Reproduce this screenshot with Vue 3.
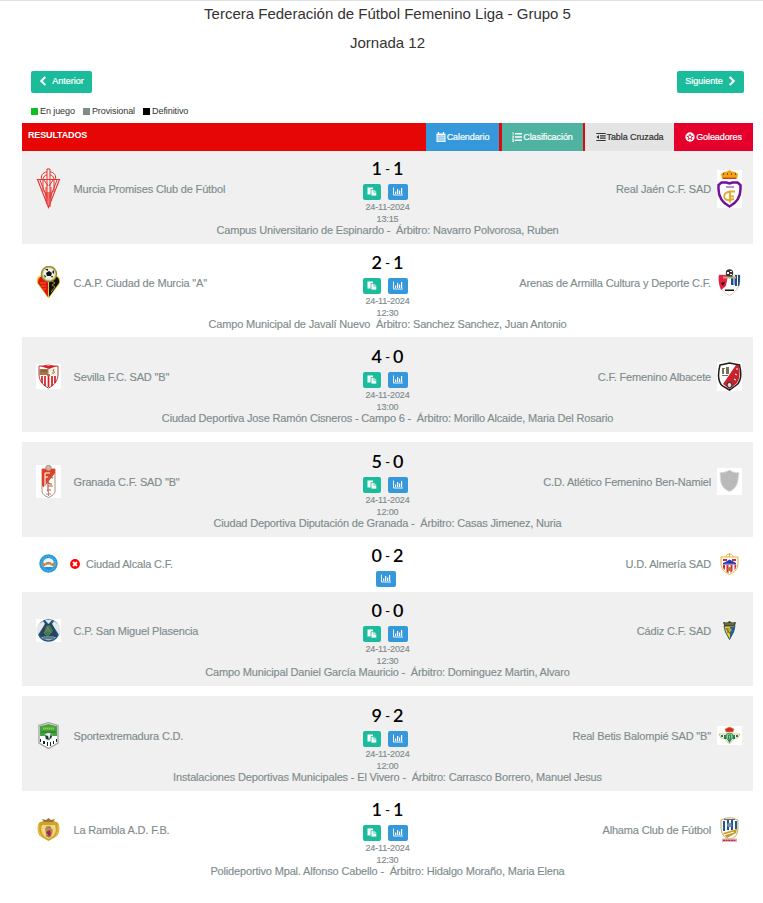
<template>
  <div class="page">
    <header class="heading">
      <h4>Tercera Federación de Fútbol Femenino Liga - Grupo 5</h4>
      <h4>Jornada 12</h4>
    </header>

    <nav class="pager">
      <button type="button" class="btn-page">
        <svg width="8" height="10" viewBox="0 0 8 10"><path d="M6.3 1 2.3 5l4 4" fill="none" stroke="#fff" stroke-width="2.1" /></svg>
        <span>Anterior</span>
      </button>
      <button type="button" class="btn-page">
        <span>Siguiente</span>
        <svg width="8" height="10" viewBox="0 0 8 10"><path d="M1.7 1l4 4-4 4" fill="none" stroke="#fff" stroke-width="2.1" /></svg>
      </button>
    </nav>

    <div class="legend">
      <span class="legend-item live">En juego</span>
      <span class="legend-item provisional">Provisional</span>
      <span class="legend-item final">Definitivo</span>
    </div>

    <div class="bar">
      <strong>RESULTADOS</strong>
      <div class="tabs">
        <a class="tab calendar">
          <svg width="10" height="10" viewBox="0 0 10 10"><path fill="#fff" d="M.5 1.5h1.3V0h1.4v1.5h3.6V0h1.4v1.5h1.3V10h-9z" /><path d="M1 3.8h8M1 5.9h8M1 8h8M3 3.5v6M5 3.5v6M7 3.5v6" stroke="#3498db" stroke-width=".5" /></svg>
          <span>Calendario</span>
        </a>
        <a class="tab ranking">
          <svg width="10" height="10" viewBox="0 0 10 10"><path d="M3 1.7h7M3 5h7M3 8.3h7" stroke="#fff" stroke-width="1.6" /><path d="M.3.7h.9v2.500M.2 4.2h1.5v.9L.3 6H2M.2 7.5h1.5v2H.2M.6 8.5h1" fill="none" stroke="#fff" stroke-width=".8" /></svg>
          <span>Clasificación</span>
        </a>
        <a class="tab cross">
          <svg width="10" height="10" viewBox="0 0 10 10"><path d="M.3 1.5h9.4M4 3.9h5.7M4 6.1h5.7M.3 8.5h9.4" stroke="#333" stroke-width="1.1" /><path fill="#333" d="M3 3v4L.3 5z" /></svg>
          <span>Tabla Cruzada</span>
        </a>
        <a class="tab scorers">
          <svg width="10" height="10" viewBox="0 0 10 10"><circle cx="5" cy="5" r="4.7" fill="#fff" /><path fill="none" stroke="#e4002b" stroke-width=".9" d="M5 3 7 4.500 6.200 6.800H3.800L3 4.500zM5 3V1.800M7 4.500l1.400-.4M6.200 6.800l.9 1.200M3.800 6.800 2.900 8M3 4.500l-1.400-.4" /></svg>
          <span>Goleadores</span>
        </a>
      </div>
    </div>

    <main class="matches">
      <section
        v-for="match in matches"
        :key="match.home"
        class="match"
        :class="{ shaded: match.shaded, spaced: match.spaced, short: !match.date, lifted: match.lifted }"
      >
        <div class="match-main">
          <div class="crest" v-html="crests[match.homeCrest]"></div>
          <div class="team home" :class="{ withdrawn: match.withdrawn }">
            <svg v-if="match.withdrawn" width="10" height="10" viewBox="0 0 10 10"><circle cx="5" cy="5" r="4.9" fill="#f00" /><path d="m3 3 4 4M7 3 3 7" stroke="#fff" stroke-width="1.8" /></svg>
            <span>{{ match.home }}</span>
          </div>
          <div class="result">
            <div class="score"><b>{{ match.score[0] }}</b><i>-</i><b>{{ match.score[1] }}</b></div>
            <div class="actions">
              <a v-if="match.date" class="action report">
                <svg width="10" height="9" viewBox="0 0 10 9"><path fill="#fff" d="M.5.500h5.500v7H.5z" /><path fill="#fff" stroke="#1abc9c" stroke-width=".8" d="M4 2.600h3l2.700 2.500V9H4z" /><path d="M6.800 2.800v2.500h2.700" fill="none" stroke="#1abc9c" stroke-width=".6" /></svg>
              </a>
              <a class="action stats">
                <svg width="10" height="9" viewBox="0 0 10 9"><path fill="none" stroke="#fff" stroke-width=".9" d="M.5.5v7.500H10" /><path fill="#fff" d="M2 4.5h1.2V7H2zM4 2h1.2v5H4zM6 3.5h1.2V7H6zM8 1h1.2v6H8z" /></svg>
              </a>
            </div>
            <template v-if="match.date">
              <div class="when">{{ match.date }}</div>
              <div class="when">{{ match.time }}</div>
            </template>
          </div>
          <div class="team away">{{ match.away }}</div>
          <div class="crest" v-html="crests[match.awayCrest]"></div>
        </div>
        <div v-if="match.venue" class="venue">{{ match.venue }}</div>
      </section>
    </main>
  </div>
</template>

<script setup>
const date = '24-11-2024'

const matches = [
  { home: 'Murcia Promises Club de Fútbol', homeCrest: 'murcia', away: 'Real Jaén C.F. SAD', awayCrest: 'jaen', score: [1, 1], date, time: '13:15', venue: 'Campus Universitario de Espinardo -\u00a0 Árbitro: Navarro Polvorosa, Ruben', shaded: true },
  { home: 'C.A.P. Ciudad de Murcia "A"', homeCrest: 'cap', away: 'Arenas de Armilla Cultura y Deporte C.F.', awayCrest: 'armilla', score: [2, 1], date, time: '12:30', venue: 'Campo Municipal de Javalí Nuevo\u00a0 Árbitro: Sanchez Sanchez, Juan Antonio' },
  { home: 'Sevilla F.C. SAD "B"', homeCrest: 'sevilla', away: 'C.F. Femenino Albacete', awayCrest: 'albacete', score: [4, 0], date, time: '13:00', venue: 'Ciudad Deportiva Jose Ramón Cisneros - Campo 6 -\u00a0 Árbitro: Morillo Alcaide, Maria Del Rosario', shaded: true, lifted: true },
  { home: 'Granada C.F. SAD "B"', homeCrest: 'granada', away: 'C.D. Atlético Femenino Ben-Namiel', awayCrest: 'blank', score: [5, 0], date, time: '12:00', venue: 'Ciudad Deportiva Diputación de Granada -\u00a0 Árbitro: Casas Jimenez, Nuria', shaded: true, spaced: true, lifted: true },
  { home: 'Ciudad Alcala C.F.', homeCrest: 'alcala', away: 'U.D. Almería SAD', awayCrest: 'almeria', score: [0, 2], withdrawn: true },
  { home: 'C.P. San Miguel Plasencia', homeCrest: 'plasencia', away: 'Cádiz C.F. SAD', awayCrest: 'cadiz', score: [0, 0], date, time: '12:30', venue: 'Campo Municipal Daniel García Mauricio -\u00a0 Árbitro: Dominguez Martin, Alvaro', shaded: true },
  { home: 'Sportextremadura C.D.', homeCrest: 'sport', away: 'Real Betis Balompié SAD "B"', awayCrest: 'betis', score: [9, 2], date, time: '12:00', venue: 'Instalaciones Deportivas Municipales - El Vivero -\u00a0 Árbitro: Carrasco Borrero, Manuel Jesus', shaded: true, spaced: true, lifted: true },
  { home: 'La Rambla A.D. F.B.', homeCrest: 'rambla', away: 'Alhama Club de Fútbol', awayCrest: 'alhama', score: [1, 1], date, time: '12:30', venue: 'Polideportivo Mpal. Alfonso Cabello -\u00a0 Árbitro: Hidalgo Moraño, Maria Elena' }
]

const svg = (height, body) => `<svg width="25" height="${height}" viewBox="0 0 25 ${height}" style="display:block">${body}</svg>`
const white = (height) => `<rect width="25" height="${height}" fill="#fff"/>`

const crests = {
  murcia: svg(41, '<g fill="none" stroke="#e5322d"><path d="M1.500 11.500h22L12.500 39.500z" stroke-width="1.100"/><path d="M11 1h3v38M11 1v35M6 12C4 8 7 4 11 4M19 12c2-4-1-8-5-8M7 11c1-3 2-4 4-4M18 11c-1-3-2-4-4-4M4 12l7 18M21 12l-7 18M7 12v12M18 12v12M8 12l4 6M17 12l-4 6M10 19v14M15 19v14"/></g><path fill="#e5322d" opacity=".6" d="M9 24h7l-3.500 15z"/>'),
  jaen: svg(38, white(38) + '<path d="M12.500 36.500C6 33 1.500 27 1.500 19v-4l3-2.500h5l3 1 3-1h5l3 2.500v4c0 8-4.500 14-11 17.500z" fill="#fff" stroke="#71139a" stroke-width="2.500"/><path fill="#f2a20d" d="M5 9 4 4l3-2 3-.500L12.500 0l2.500 1.500 3 .500 3 2-1 5z"/><path d="M6 8.300h13" stroke="#c9362b" stroke-width="1.300"/><path d="M6 4h1m3 0h1m3 0h1m3 0h1" stroke="#a44317" stroke-width="2"/><path d="M9 17h8" stroke="#a96bc0" stroke-width="1.500"/><g fill="none" stroke="#e0ac30" stroke-width="1.900"><path d="M18 21.500h-5v11M13 26.500h4M13 22c-7-1-8 9-1 8l5-1"/></g>'),
  cap: svg(33, '<path fill="#e9c62f" d="M12.500 32.500 1 17c-1-5 2-8 5-8h13c4 1 6 4 4.500 9z"/><path fill="#df1410" d="M12 31 2 17c0-5 3-7 5-7l5 4z"/><path fill="#111" d="M13 31V14l5-4c4 0 6 4 5 7z"/><circle cx="13" cy="8" r="7.500" fill="#ded9a8" stroke="#998d28" stroke-width="1.500"/><circle cx="13" cy="8" r="5.500" fill="#eee"/><path fill="#111" d="m13 5 3 2-1 3h-4l-1-3zM9 3h3v2zM18 4v4l-2-2zM8 9l2 1-1 2zM17 10h-2l1 2z"/><path d="M4 17h6M5 20h5M7 23h3" stroke="#e36e22"/><path d="m16 15 3 2-3 2 3 2-4 5" fill="none" stroke="#a58c22"/>'),
  armilla: svg(27, '<path fill="#fff" stroke="#c8bb91" stroke-width=".700" d="M2 6h21c0 10-1 15-10.500 20.500C3 22 2 15 2 6z"/><path fill="#e72043" d="M2 6h9l-2 11-5 4C2 16 1 11 2 6z"/><path fill="#204d86" d="M14 7h2v9h-2zM18 6h2v11h-2zM21 6h2c0 5 0 9-1 11h-1z"/><path fill="#8fa7c4" d="M16 8h2v8h-2z"/><path d="M6 8.500h13" stroke="#c3a67b" stroke-width="2"/><circle cx="12.500" cy="4" r="3.700" fill="#333"/><path fill="#fff" d="M10 3h2v2h-2zM13 2h2v1h-2zM13 5h2v1h-2z"/><path fill="#111" d="m4 14 4-1-2 4zM8 20.500h9V22H8z"/><path fill="#fff" d="m11 11 5 8H8z"/>'),
  sevilla: svg(25, white(25) + '<path fill="#fff" stroke="#b43d35" stroke-width="1" d="M3 2h4l5.500-1L18 2h4v8c0 6-3 11-9.500 14C6 21 3 16 3 10z"/><path d="M6 12v7M9 12v10M12.500 12v11M16 12v10M19 12v7" stroke="#d41f28" stroke-width="1.700"/><path fill="#d42028" d="M4 2h17L13 5z"/><path fill="#ab7343" d="M3.500 5h9v6h-9zM11 10h3v2h-3z"/><circle cx="17" cy="7.500" r="3.600" fill="#f6f0dc"/><path d="M16 9c3 1 3-2 1-2l1-2M5 7h6" fill="none" stroke="#655040" stroke-width=".8"/>'),
  albacete: svg(29, white(29) + '<path fill="#fff" stroke="#1d1a1a" stroke-width="1.500" d="m3 3 5-1 4.500-1 5 1 5 1c2 8 2 16-3 20l-7 5-7-4C1 20 1 11 3 3z"/><path fill="#c8222c" d="M19 3h3c1 8 1 15-3 19l-6.500 5L6 22z"/><path fill="#777052" d="M5 6h3v1H7v5H5zM9 5h3v7H9zM5 13h6v1H5z"/><path d="M20 6v2M18 12l2 1M17 17l2 1" stroke="#fff"/><circle cx="12.500" cy="23" r="2.500" fill="#ddd" stroke="#222"/>'),
  granada: svg(33, white(33) + '<path fill="#fff" stroke="#b98b76" stroke-width="1" d="M6 4h13v22c0 3-3 5-6.500 6.500C9 31 6 29 6 26z"/><path fill="#e83a20" d="M6 4h13v4L9 21H6z"/><path d="M9 21V8h7M9 12h5M19 7 7 22M17 13c-6-3-7 7-1 6M12 14v13M12 21h5M11 25h4" fill="none" stroke="#bf5b47" stroke-width="1.200"/><path d="M9 21V8h5M9 12h3" fill="none" stroke="#fff"/><circle cx="12.500" cy="3" r="2.800" fill="#cbb6a2" stroke="#a17966" stroke-width=".7"/><path d="M12.500 27v4M10 29h5" stroke="#b68777"/>'),
  blank: svg(27, white(27) + '<path fill="#bababa" stroke="#ddd" stroke-width=".700" d="M3 4.500c3 .500 7-1 9.500-2.500C15 4 19 5 22 4.500l-1 8c-1 6-4 9-8.500 11-5-2-8-5-9-11z"/>'),
  alcala: svg(19, '<circle cx="12.500" cy="9.500" r="9.200" fill="#269bdc"/><circle cx="12.500" cy="9.500" r="7" fill="none" stroke="#82c7ea" stroke-dasharray="1 1.300"/><circle cx="12.500" cy="9.500" r="5.500" fill="#e9f5fb"/><path fill="#bd8a4e" d="M6 10c0-2 2-2 3 0 1-3 6-3 7 0 1-2 3-2 3 0v2h-3c-1-2-6-2-7 0H6z"/><path fill="#278bd0" d="M8 13h9l-2 2h-5z"/>'),
  almeria: svg(22, '<path fill="#fff" stroke="#e3b13e" stroke-width="1" d="M4 4h17v6c0 6-3 9-8.500 11.500C7 19 4 16 4 10z"/><path fill="none" stroke="#e4b440" d="M9 4c0-4 7-4 7 0M12.500 0v4"/><path fill="#e6252c" d="M6 6h4v2H6zM15 6h4v2h-4zM6 12h2v5l-2-2zM9.500 12h2v8l-2-1zM13.500 12h2v6l-2 2zM17.500 12h2l-1 4-1 1z"/><path fill="#2037b8" d="M6 10q3-1 6.500-3.500L19 10v1.500H6z"/><path d="M8 11h9" stroke="#87a2d6" stroke-width=".7"/><circle cx="12.500" cy="16" r="2" fill="#b57b22"/>'),
  plasencia: svg(23, white(23) + '<circle cx="12.500" cy="11.500" r="11.200" fill="#24527e"/><path fill="#e2e9eb" d="m2 6 5-4 2 3-7 11C0 12 0 9 2 6zM23 6l-5-4-2 3 7 11c2-4 2-7 0-10zM9 1h7l-3.500 4z"/><path fill="#27445b" d="m9 5 7 0 5 11-8 5-9-5z"/><path fill="#2f815c" d="m10 7 4-1 3 6-5 6-4-3z"/><path d="m8 14 4-5 3 5M12 7v6" stroke="#b06f56" fill="none"/><path fill="#9eb5bc" d="m5 18.500 3-1h9l3 1-2 1.500-5.500 1.500L7 20z"/><path d="M7 19h11" stroke="#23415f"/>'),
  cadiz: svg(19, '<path fill="#edce26" stroke="#28557c" stroke-width="1" d="M7 5h11l-1.500 6-4 7.500-4-7.500z"/><path fill="#205c9b" d="M13 6h5l-1 4-4 8z"/><path fill="#41452f" d="M7 4 6 1l4 .500L12.500 0 15 1.500 19 1l-1 4H7z"/><path d="M8 3h9" stroke="#9b8e3d"/><path d="m9 7 5 7M11 7v5" stroke="#665f28"/><circle cx="13" cy="9" r="1.800" fill="#bba54a"/>'),
  sport: svg(27, '<path fill="#fff" stroke="#a4a7a5" stroke-width="1.400" d="M3 3.500 12.500.700 22 3.500V21l-9.500 5.500L3 21z"/><path fill="#40a43c" d="M4 4.300 12.500 2 21 4.300V14H4z"/><path d="M7 6.500h11" stroke="#a7c64b" stroke-width="2" stroke-dasharray="1.500 .500"/><path d="M5 10h15" stroke="#21752f"/><circle cx="12.500" cy="15" r="4" fill="#e4eee4"/><path fill="#183d2a" d="m9 13 3 1 1 4-3-1zM15 11l1 4-3 3z"/><path fill="#222" d="M4 17h1v3H4zM7 19h2v3H7zM11 20h1v4h-1zM14 20h1v4h-1zM17 19h1v3h-1zM20 17h1v3h-1z"/>'),
  betis: svg(19, white(19) + '<path fill="#fff" stroke="#c9ae6a" stroke-width=".8" d="M2 8h21l-2 4h-3l-5.500 6L7 12H4z"/><path fill="#16834d" d="M4 9h2v2H4zM7 9h2v4H7zM16 9h2v4h-2zM19 9h2v2h-2zM10 13h5l-2.500 4z"/><circle cx="12.500" cy="10.500" r="3.500" fill="#98c6a2" stroke="#3e9864"/><path d="M11.500 9v4h2V9z" fill="none" stroke="#2c8952"/><path fill="#d92828" stroke="#c99f30" stroke-width=".7" d="m9 6-1-3 4.500-2L17 3l-1 3z"/>'),
  rambla: svg(25, '<path fill="#d4a127" d="M3 6c2-3 17-3 19 0 2 4 2 9-1 13l-8.500 5L4 19C1 15 1 10 3 6z"/><path fill="#f2d784" d="M6 8h13c2 6 0 11-6.500 14C6 19 4 14 6 8z"/><path fill="#b98a50" d="m9 11 5-1 3 3-1 5-3 3-3-3z"/><path fill="#9f2552" d="m10 15 4-2 1 4-2 2z"/><path d="M10 10h5M10 19h5" stroke="#614f43" stroke-width=".8"/><path fill="#95753b" d="M8 5 6 2l4 1 2.500-2L15 3l4-1-2 3z"/><path d="M3 8c-1 5 0 9 4 13M22 8c1 5 0 9-4 13" fill="none" stroke="#eec453"/>'),
  alhama: svg(26, '<path fill="#f8f7ed" stroke="#c5ad62" stroke-width="1" d="M4 3c6-3 11-3 17 0v8c0 6-3 11-8.500 11S4 16 4 10z"/><path fill="#2454a0" d="M6 4h2v10H6zM10 3h2v10h-2zM14 3h2v10h-2zM18 4h2v8h-2z"/><path d="M7 2.500h11" stroke="#606f7d"/><circle cx="12.500" cy="8" r="2.300" fill="#7b92aa"/><path fill="#c79c27" d="m6 16 14-4-1 4-9 5z"/><path d="m7 18 10-3" stroke="#fff"/><path fill="#e1b3b9" d="M5 21.500h15V25H5z"/><path d="M6 23.300h13" stroke="#b52649" stroke-width="1.300" stroke-dasharray="2 .600"/>')
}
</script>

<style>
body {
  background: #fff;
}
</style>

<style scoped>
.page {
  box-sizing: border-box;
  height: 903px;
  overflow: hidden;
  padding: 0 10px 0 22px;
  border-top: 1px solid #e0e0e0;
  font-family: 'Liberation Sans', Arial, sans-serif;
  color: #333;
}

.heading {
  height: 70px;
  text-align: center;
}

h4 {
  margin: 0;
  padding-top: 4px;
  height: 25px;
  font-size: 15px;
  line-height: 17px;
  font-weight: 400;
}

.pager {
  display: flex;
  justify-content: space-between;
  padding: 0 9px;
}

.btn-page {
  display: flex;
  align-items: center;
  justify-content: center;
  gap: 5px;
  height: 22px;
  width: 61px;
  padding: 0 0 2px;
  border: 0;
  border-radius: 2px;
  background: #1abc9c;
  color: #fff;
  font: 9px 'Liberation Sans', Arial, sans-serif;
  -webkit-text-stroke: 0.2px #fff;
}

.btn-page:last-child {
  width: 67px;
}

.legend {
  display: flex;
  gap: 8px;
  padding: 12px 0 0 9px;
  height: 18px;
  font-size: 9px;
  line-height: 12px;
  letter-spacing: -0.08px;
}

.legend-item::before {
  content: '';
  display: inline-block;
  width: 7px;
  height: 7px;
  margin-right: 2px;
  vertical-align: -1px;
  background: #10c020;
}

.legend .provisional::before {
  background: #7f8c8d;
}

.legend .final::before {
  background: #000;
}

.bar {
  position: relative;
  z-index: 1;
  display: flex;
  justify-content: space-between;
  height: 28px;
  background: #e60606;
  color: #fff;
  font-size: 9px;
}

.bar strong {
  padding-left: 6px;
  line-height: 25px;
  letter-spacing: -0.15px;
}

.tabs {
  display: flex;
}

.tab {
  display: flex;
  align-items: center;
  justify-content: center;
  gap: 1px;
  letter-spacing: -0.08px;
  -webkit-text-stroke: 0.2px currentColor;
}

.calendar {
  width: 73px;
  margin-right: 3px;
  background: #3498db;
}

.ranking {
  width: 81px;
  margin-right: 2px;
  background: #4fb3a1;
}

.cross {
  width: 89px;
  background: #e4e4e4;
  color: #333;
}

.scorers {
  width: 79px;
  background: #e4002b;
}

/* first row slides one pixel under the bar */
.matches {
  margin-top: -1px;
}

.match {
  height: 94px;
  color: #7f8c8d;
}

.shaded {
  background: #f0f0f0;
}

.lifted {
  box-shadow: 0 -1px #f0f0f0;
}

.spaced {
  margin-top: 11px;
}

.match-main {
  display: grid;
  grid-template-columns: 25px 228px 1fr 228px 25px;
  align-items: center;
  height: 77px;
  padding: 0 11px 0 14px;
}

.short {
  height: 55px;
}

.short .match-main {
  height: 53px;
}

.team {
  font-size: 11px;
  letter-spacing: -0.16px;
  -webkit-text-stroke: 0.15px currentColor;
}

.home {
  padding-left: 12.5px;
}

.withdrawn {
  display: flex;
  align-items: center;
  gap: 6px;
  padding-left: 9px;
}

.away {
  padding-right: 6px;
  text-align: right;
}

.result {
  align-self: start;
  margin-left: -3px;
  padding-top: 7px;
  text-align: center;
}

.score {
  display: flex;
  justify-content: center;
  align-items: center;
  gap: 3px;
  height: 22px;
  color: #000;
  font-family: Lato, sans-serif;
  font-size: 18px;
}

.score b {
  font-weight: 600;
}

.score i {
  font-style: normal;
  font-size: 14px;
}

.actions {
  display: flex;
  justify-content: center;
  gap: 7px;
  height: 16px;
  margin: 5px 4px 2px 0;
}

.action {
  box-sizing: border-box;
  display: flex;
  align-items: center;
  justify-content: center;
  width: 20px;
  padding-bottom: 1px;
  border-radius: 2px;
  background: #3498db;
}

.report {
  width: 18px;
  background: #1abc9c;
}

.when {
  font-size: 9px;
  line-height: 11.5px;
  letter-spacing: -0.12px;
  -webkit-text-stroke: 0.15px currentColor;
}

.venue {
  margin-top: -4px;
  font-size: 11px;
  line-height: 14px;
  letter-spacing: -0.17px;
  text-align: center;
  white-space: pre;
  -webkit-text-stroke: 0.15px currentColor;
}
</style>
